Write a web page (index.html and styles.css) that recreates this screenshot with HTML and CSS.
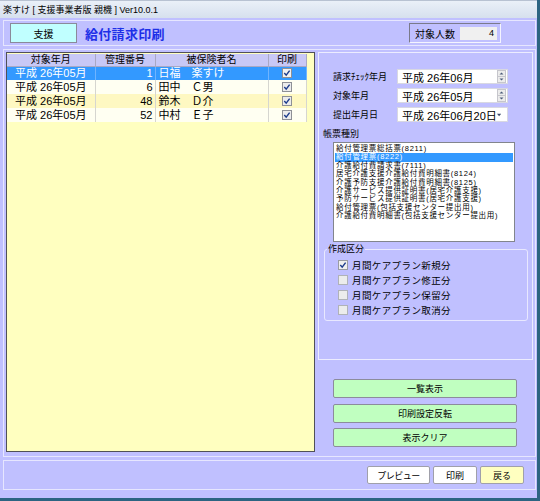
FILE: index.html
```html
<!DOCTYPE html>
<html lang="ja">
<head>
<meta charset="utf-8">
<title>給付請求印刷</title>
<link rel="stylesheet" href="styles.css">
</head>
<body>
<div class="window">
  <div class="titlebar">楽すけ [ 支援事業者版 親機 ] Ver10.0.1</div>

  <div class="header">
    <div class="badge">支援</div>
    <div class="title">給付請求印刷</div>
    <div class="count">
      <span class="count-label">対象人数</span>
      <span class="count-value">4</span>
    </div>
  </div>

  <div class="main">
    <div class="grid">
      <table class="list">
        <colgroup>
          <col class="c1"><col class="c2"><col class="c3"><col class="c4">
        </colgroup>
        <thead>
          <tr><th>対象年月</th><th>管理番号</th><th>被保険者名</th><th>印刷</th></tr>
        </thead>
        <tbody>
          <tr class="sel">
            <td class="date">平成 26年05月</td><td class="num">1</td><td class="name">日福　楽すけ</td>
            <td class="chk"><svg class="cb" width="10" height="10" viewBox="0 0 10 10"><rect x="0.5" y="0.5" width="9" height="9" fill="#f2f2f2" stroke="#8e9096"/><path d="M2.3 5 L4.2 7.2 L7.6 2.6" fill="none" stroke="#1d3c8c" stroke-width="1.4"/></svg></td>
          </tr>
          <tr class="r-light">
            <td class="date">平成 26年05月</td><td class="num">6</td><td class="name">田中　Ｃ男</td>
            <td class="chk"><svg class="cb" width="10" height="10" viewBox="0 0 10 10"><rect x="0.5" y="0.5" width="9" height="9" fill="#ececec" stroke="#8e9096"/><path d="M2.3 5 L4.2 7.2 L7.6 2.6" fill="none" stroke="#1d3c8c" stroke-width="1.4"/></svg></td>
          </tr>
          <tr class="r-yellow">
            <td class="date">平成 26年05月</td><td class="num">48</td><td class="name">鈴木　Ｄ介</td>
            <td class="chk"><svg class="cb" width="10" height="10" viewBox="0 0 10 10"><rect x="0.5" y="0.5" width="9" height="9" fill="#ececec" stroke="#8e9096"/><path d="M2.3 5 L4.2 7.2 L7.6 2.6" fill="none" stroke="#1d3c8c" stroke-width="1.4"/></svg></td>
          </tr>
          <tr class="r-light">
            <td class="date">平成 26年05月</td><td class="num">52</td><td class="name">中村　Ｅ子</td>
            <td class="chk"><svg class="cb" width="10" height="10" viewBox="0 0 10 10"><rect x="0.5" y="0.5" width="9" height="9" fill="#ececec" stroke="#8e9096"/><path d="M2.3 5 L4.2 7.2 L7.6 2.6" fill="none" stroke="#1d3c8c" stroke-width="1.4"/></svg></td>
          </tr>
        </tbody>
      </table>
    </div>

    <div class="side">
      <div class="side-box">
        <div class="form-row">
          <span class="f-label">請求ﾁｪｯｸ年月</span>
          <div class="field">
            <span>平成 26年06月</span>
            <svg class="spin" width="9" height="13" viewBox="0 0 9 13"><rect x="0.5" y="0.5" width="8" height="12" fill="#ececec" stroke="#c6c6cc"/><line x1="1" y1="6.5" x2="8" y2="6.5" stroke="#c6c6cc"/><path d="M2.5 4.5 L4.5 2.5 L6.5 4.5 Z" fill="#4a5a78"/><path d="M2.5 8.5 L4.5 10.5 L6.5 8.5 Z" fill="#4a5a78"/></svg>
          </div>
        </div>
        <div class="form-row">
          <span class="f-label">対象年月</span>
          <div class="field">
            <span>平成 26年05月</span>
            <svg class="spin" width="9" height="13" viewBox="0 0 9 13"><rect x="0.5" y="0.5" width="8" height="12" fill="#ececec" stroke="#c6c6cc"/><line x1="1" y1="6.5" x2="8" y2="6.5" stroke="#c6c6cc"/><path d="M2.5 4.5 L4.5 2.5 L6.5 4.5 Z" fill="#4a5a78"/><path d="M2.5 8.5 L4.5 10.5 L6.5 8.5 Z" fill="#4a5a78"/></svg>
          </div>
        </div>
        <div class="form-row">
          <span class="f-label">提出年月日</span>
          <div class="field">
            <span>平成 26年06月20日</span>
            <svg class="drop" width="7" height="4" viewBox="0 0 7 4"><path d="M0 0 L7 0 L3.5 4 Z" fill="#3c4c6c"/></svg>
          </div>
        </div>

        <div class="sec-label">帳票種別</div>
        <div class="listbox">
          <div class="item">給付管理票総括票(8211)</div>
          <div class="item selected">給付管理票(8222)</div>
          <div class="item">介護給付費請求書(7111)</div>
          <div class="item">居宅介護支援介護給付費明細書(8124)</div>
          <div class="item">介護予防支援介護給付費明細書(8125)</div>
          <div class="item">介護サービス提供証明書(居宅介護支援)</div>
          <div class="item">予防サービス提供証明書(居宅介護支援)</div>
          <div class="item">給付管理票(包括支援センター提出用)</div>
          <div class="item">介護給付費明細書(包括支援センター提出用)</div>
        </div>

        <fieldset class="group">
          <legend>作成区分</legend>
          <div class="checks">
            <div class="opt"><svg class="ocb" width="10" height="10" viewBox="0 0 10 10"><rect x="0.5" y="0.5" width="9" height="9" fill="#f0f0f0" stroke="#9a9ca2"/><path d="M2.3 5 L4.2 7.2 L7.6 2.6" fill="none" stroke="#1d3c8c" stroke-width="1.4"/></svg><span>月間ケアプラン新規分</span></div>
            <div class="opt"><svg class="ocb" width="10" height="10" viewBox="0 0 10 10"><rect x="0.5" y="0.5" width="9" height="9" fill="#ececec" stroke="#b0b2b8"/></svg><span>月間ケアプラン修正分</span></div>
            <div class="opt"><svg class="ocb" width="10" height="10" viewBox="0 0 10 10"><rect x="0.5" y="0.5" width="9" height="9" fill="#ececec" stroke="#b0b2b8"/></svg><span>月間ケアプラン保留分</span></div>
            <div class="opt"><svg class="ocb" width="10" height="10" viewBox="0 0 10 10"><rect x="0.5" y="0.5" width="9" height="9" fill="#ececec" stroke="#b0b2b8"/></svg><span>月間ケアプラン取消分</span></div>
          </div>
        </fieldset>
      </div>

      <div class="actions">
        <div class="btn-green">一覧表示</div>
        <div class="btn-green">印刷設定反転</div>
        <div class="btn-green">表示クリア</div>
      </div>
    </div>
  </div>

  <div class="footer">
    <div class="btn btn-wide">プレビュー</div>
    <div class="btn">印刷</div>
    <div class="btn btn-back">戻る</div>
  </div>
</div>
</body>
</html>
```

FILE: styles.css
```css
* { box-sizing: border-box; }
html, body { margin: 0; padding: 0; }
body {
  width: 540px;
  height: 501px;
  overflow: hidden;
  background: #c0c0ff;
  font-family: "Liberation Sans", "Noto Sans CJK JP", sans-serif;
  font-size: 10px;
  color: #000;
}
.window {
  width: 540px;
  height: 501px;
  background: #c0c0ff;
  border-right: 3px solid #2c6482;
  border-bottom: 3px solid #2c6482;
  display: flex;
  flex-direction: column;
}
.titlebar {
  height: 18px;
  line-height: 18px;
  padding-left: 3px;
  font-size: 9px;
  background: linear-gradient(#eaf0f8, #d6e0ee);
  border-top: 1px solid #b8c2d2;
  white-space: nowrap;
}

/* header */
.header {
  margin: 2px 0 0 3px;
  width: 533px;
  height: 26px;
  border: 1px solid #e6e6ff;
  display: flex;
  align-items: center;
  padding-left: 6px;
}
.badge {
  width: 67px;
  height: 20px;
  background: #c0ffff;
  border: 1px solid #8a8a9a;
  display: flex;
  align-items: center;
  justify-content: center;
  font-size: 10px;
}
.title {
  margin-left: 8px;
  font-size: 13px;
  font-weight: bold;
  color: #1e30e8;
  letter-spacing: 0.3px;
}
.count {
  margin-left: auto;
  margin-right: 34px;
  width: 92px;
  height: 20px;
  border: 1px solid;
  border-color: #7a7a8a #f4f4ff #f4f4ff #7a7a8a;
  display: flex;
  align-items: center;
  padding-left: 5px;
}
.count-label { font-size: 10px; }
.count-value {
  margin-left: auto;
  margin-right: 3px;
  width: 37px;
  height: 13px;
  line-height: 13px;
  background: #f0f0f0;
  text-align: right;
  padding-right: 3px;
  font-size: 9px;
}

/* main area */
.main {
  margin: 3px 0 0 3px;
  width: 533px;
  height: 408px;
  border: 1px solid #e6e6ff;
  padding: 2px;
  display: flex;
  align-items: flex-start;
  gap: 3px;
}
.grid {
  width: 309px;
  height: 400px;
  background: #ffffc0;
  border: 1px solid #505058;
  padding-top: 1px;
}
.list {
  border-collapse: collapse;
  table-layout: fixed;
  width: 299px;
  font-size: 11px;
}
.c1 { width: 88px; }
.c2 { width: 60px; }
.c3 { width: 113px; }
.c4 { width: 38px; }
.list th {
  height: 12px;
  padding: 0;
  font-weight: normal;
  font-size: 10px;
  line-height: 11px;
  text-align: center;
  background: #c8c8f6;
  border-right: 1px solid #a8a8c4;
  border-bottom: 1px solid #a8a8c4;
}
.list td {
  height: 14px;
  padding: 0 2px;
  line-height: 13px;
  white-space: nowrap;
  overflow: hidden;
  border-right: 1px solid #d6d6d0;
}
.list .date { text-align: center; }
.list .num { text-align: right; }
.list .name { padding-left: 3px; }
.list .chk { text-align: center; }
.cb { display: inline-block; vertical-align: middle; margin-top: -2px; }
.sel td { background: #3399ff; color: #fff; border-right-color: #6fb4ff; }
.r-light td { background: #fffff2; }
.r-yellow td { background: #fef8c2; }

/* right side */
.side {
  width: 215px;
  display: flex;
  flex-direction: column;
}
.side-box {
  height: 308px;
  border: 1px solid #ececff;
  padding-top: 16px;
}
.form-row {
  display: flex;
  align-items: center;
  height: 15px;
  margin-left: 14px;
}
.form-row + .form-row { margin-top: 4px; }
.f-label {
  width: 64px;
  font-size: 9px;
  white-space: nowrap;
}
.field {
  width: 111px;
  height: 15px;
  background: #fff;
  border: 1px solid #d8d8e2;
  display: flex;
  align-items: center;
  padding-left: 4px;
  padding-right: 1px;
  font-size: 11px;
  white-space: nowrap;
}
.spin { margin-left: auto; }
.drop { margin-left: auto; margin-right: 5px; }

.sec-label {
  margin: 7px 0 0 4px;
  font-size: 9px;
  line-height: 10px;
}
.listbox {
  margin: 3px 0 0 14px;
  width: 182px;
  height: 100px;
  background: #fff;
  border: 1px solid #82858c;
  padding: 2px 1px;
  font-size: 7.5px;
  line-height: 8.4px;
  letter-spacing: 0.7px;
}
.item {
  height: 8.4px;
  padding-left: 1px;
  white-space: nowrap;
}
.item.selected { background: #3399ff; color: #fff; }

.group {
  margin: 2px 4px 0 5px;
  padding: 0;
  border: 1px solid #e8e8ff;
  border-radius: 3px;
  min-width: 0;
}
.group legend {
  margin-left: 2px;
  padding: 0 1px;
  font-size: 9px;
  line-height: 10px;
}
.checks { padding: 3px 0 3px 13px; }
.opt {
  height: 15px;
  display: flex;
  align-items: center;
  gap: 4px;
  font-size: 9.5px;
  letter-spacing: 0.4px;
}

.actions {
  margin: 19px 0 0 15px;
  display: flex;
  flex-direction: column;
  gap: 5.5px;
}
.btn-green {
  width: 184px;
  height: 19px;
  background: #c0ffc0;
  border: 1px solid #8c8c9c;
  border-radius: 2px;
  display: flex;
  align-items: center;
  justify-content: center;
  font-size: 9px;
}

/* footer */
.footer {
  margin: 3px 0 0 3px;
  width: 533px;
  height: 30px;
  border: 1px solid #e6e6ff;
  display: flex;
  justify-content: flex-end;
  align-items: center;
  gap: 3px;
  padding-right: 11px;
}
.btn {
  width: 44px;
  height: 18px;
  background: #fff;
  border: 1px solid #a0a0aa;
  border-radius: 2px;
  display: flex;
  align-items: center;
  justify-content: center;
  font-size: 9px;
}
.btn-wide { width: 63px; letter-spacing: -0.5px; }
.btn-back { background: #ffffc0; }
```
